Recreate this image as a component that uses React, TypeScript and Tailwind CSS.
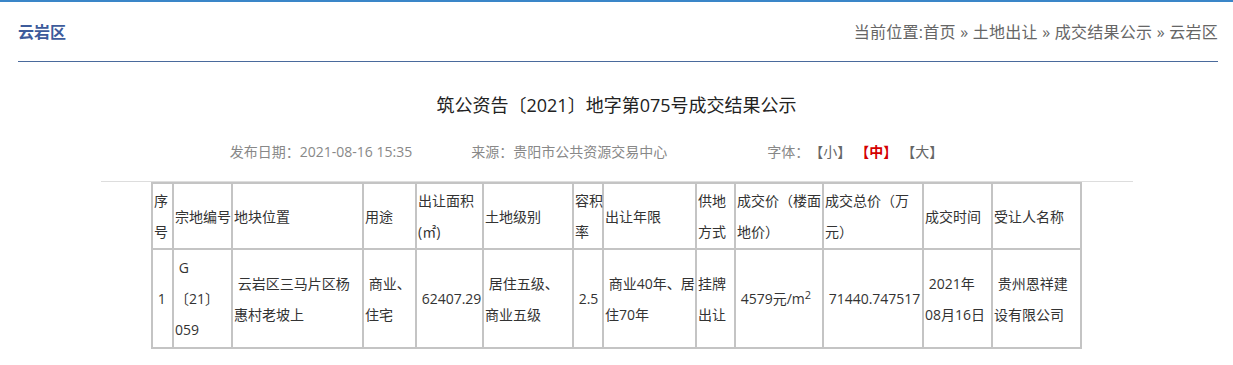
import React from "react";

const cols = [21, 59, 131, 53, 67, 90, 30, 93, 39, 88, 100, 69, 89];

const head: React.ReactNode[] = [
  <>序<br />号</>,
  "宗地编号",
  "地块位置",
  "用途",
  <>出让面积<br />(㎡)</>,
  "土地级别",
  <>容积<br />率</>,
  "出让年限",
  <>供地<br />方式</>,
  <>成交价（楼面<br />地价）</>,
  <>成交总价（万<br />元）</>,
  "成交时间",
  "受让人名称",
];

const row: React.ReactNode[] = [
  "\u00a01",
  <>{"\u00a0"}G<br />〔21〕<br />059</>,
  <>{"\u00a0"}云岩区三马片区杨<br />惠村老坡上</>,
  <>{"\u00a0"}商业、<br />住宅</>,
  "\u00a062407.29",
  <>{"\u00a0"}居住五级、<br />商业五级</>,
  "\u00a02.5",
  <>{"\u00a0"}商业40年、居<br />住70年</>,
  <>挂牌<br />出让</>,
  <>{"\u00a0"}4579元/m<sup className="text-[11px]">2</sup></>,
  "\u00a071440.747517",
  <>{"\u00a0"}2021年<br />08月16日</>,
  <>{"\u00a0"}贵州恩祥建<br />设有限公司</>,
];

const cell =
  "border-2 border-[#c4c4c4] p-px align-middle text-left whitespace-nowrap overflow-visible";

export default function App() {
  return (
    <div
      className="min-h-screen bg-white text-[#333] [text-spacing-trim:space-all]"
      style={{ fontFamily: '"Open Sans","Noto Sans CJK SC",sans-serif' }}
    >
      <div className="h-[2px] bg-[#3a86c8]" />

      <div className="pl-[18px] pr-[15px]">
        <div className="flex h-[60px] items-center justify-between border-b border-[#4a6a9c]">
          <span className="text-[16px] font-bold text-[#3d5b9b]">云岩区</span>
          <span className="text-[16px] tracking-[0.25px] text-[#666]">
            当前位置:首页 » 土地出让 » 成交结果公示 » 云岩区
          </span>
        </div>
      </div>

      <h1 className="mt-[29px] text-center text-[18px] leading-[28px] text-[#222]">
        筑公资告〔2021〕地字第075号成交结果公示
      </h1>

      <div className="mx-auto mt-[23px] w-[1032px] border-b border-[#ddd] pb-[19px] text-center text-[14px] leading-[20px] text-[#888]">
        <span className="mr-[59px]">发布日期：2021-08-16 15:35</span>
        <span className="mr-[100px]">来源：贵阳市公共资源交易中心</span>
        <span>字体：</span>
        <span className="text-[#666]">【小】</span>
        <span className="ml-[4px] font-bold text-[#d40000]">【中】</span>
        <span className="ml-[4px] mr-[60px] text-[#666]">【大】</span>
      </div>

      <table className="mx-auto w-[927px] table-fixed border-collapse text-[14px] leading-[31px] text-[#333]">
        <colgroup>
          {cols.map((w, i) => (
            <col key={i} style={{ width: w }} />
          ))}
        </colgroup>
        <tbody>
          <tr>
            {head.map((h, i) => (
              <td key={i} className={cell}>
                {h}
              </td>
            ))}
          </tr>
          <tr className="h-[99px]">
            {row.map((c, i) => (
              <td key={i} className={cell}>
                {c}
              </td>
            ))}
          </tr>
        </tbody>
      </table>
    </div>
  );
}
